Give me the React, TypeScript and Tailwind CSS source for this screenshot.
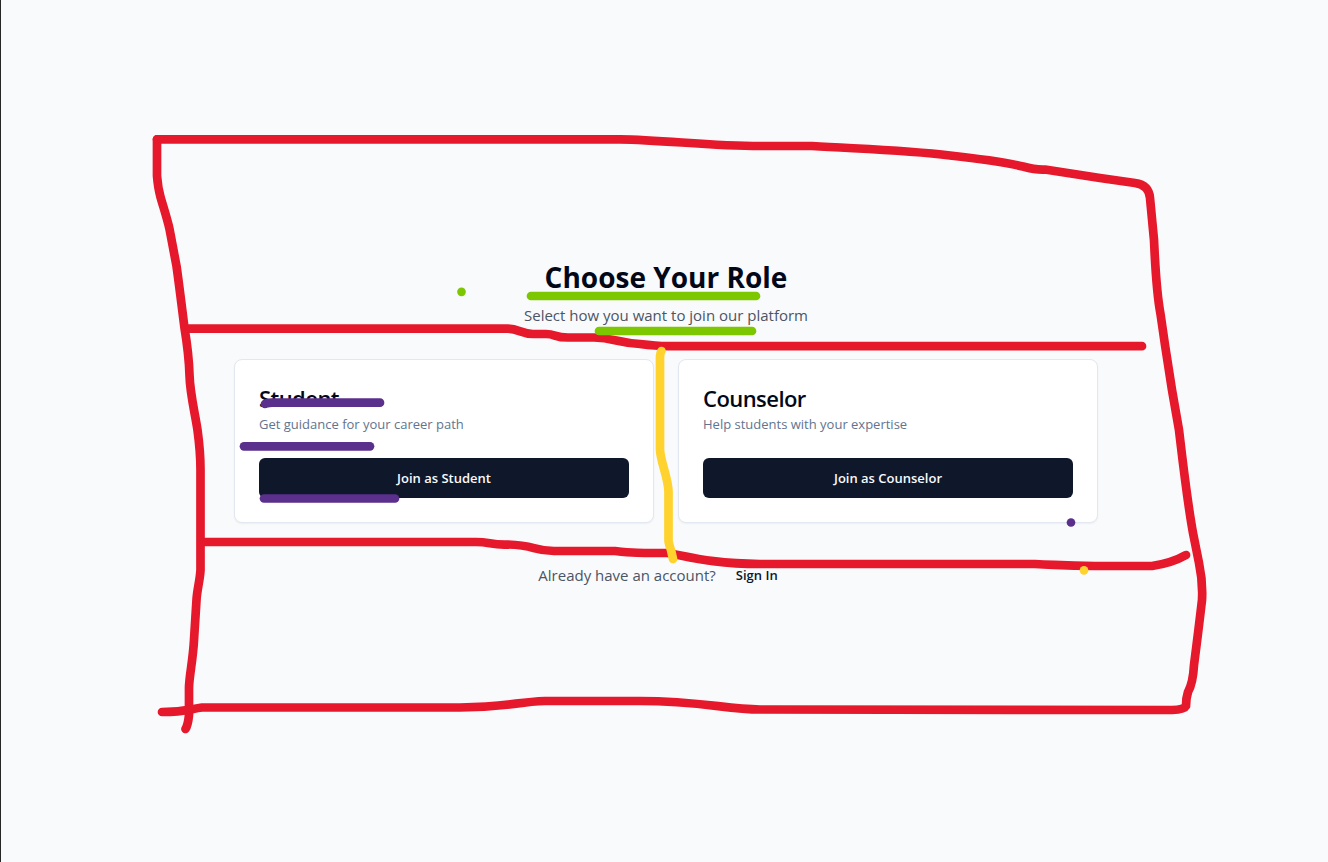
type Role = { title: string; description: string; action: string };

const roles: Role[] = [
  { title: "Student", description: "Get guidance for your career path", action: "Join as Student" },
  { title: "Counselor", description: "Help students with your expertise", action: "Join as Counselor" },
];

function RoleCard({ title, description, action }: Role) {
  return (
    <section className="rounded-lg border border-slate-200 bg-white p-6 shadow-xs">
      <h2 className="pt-0.5 text-[22px] leading-6 font-semibold tracking-tight text-[#020817]">{title}</h2>
      <p className="mt-1 text-[13px] leading-5 text-slate-500">{description}</p>
      <button
        type="button"
        className="mt-6 h-10 w-full rounded-md bg-slate-900 px-4 text-[13px] leading-5 font-semibold text-slate-50"
      >
        {action}
      </button>
    </section>
  );
}

function Markup() {
  return (
    <svg
      aria-hidden="true"
      className="pointer-events-none absolute inset-0 h-full w-full"
      viewBox="1 0 1327 862"
      fill="none"
      strokeWidth="8.7"
      strokeLinecap="round"
      strokeLinejoin="round"
    >
      <g stroke="#e5182c">
        <path d="M157 139.300V176Q158 188 160.500 197C163 206 167 218 169.500 229L176.500 266C178 276 180 292 184.500 328C187 343 189 358 189.500 375C190 394 195 413 197.500 430Q200.500 452 200.500 470V570C200 580 197 590 196.500 600L194 640C193 660 189 677 189 688V715Q188 725 185.500 729" />
        <path d="M157 139.300H620C665 140 710 146 760 146H812C860 149 905 150 950 155.500Q1000 161 1023 166.500Q1036 170 1045 169.500L1100 178L1135 183Q1149 185 1150 198L1154 240C1155 260 1156 290 1160.500 314L1165 345L1172 390L1179 430C1182 455 1187 500 1193 533Q1196 548 1199 563Q1203 582 1202 600Q1199 626 1194 665Q1193 683 1188 692Q1186 698 1186 706Q1184 709.800 1172 710L760 709.500C725 709 700 701 640 701H545C515 702 510 707 460 707.500H202C190 709 185 712 162 712" />
        <path d="M189 328.700H508C519 329 522 334 533 334H546C556 334 554 337.500 568 337.500H594C614 338 618 343 640 344Q656 346 668 346.200H1142" />
        <path d="M205 542H476C490 542 491 545 507 544.500C536 545 532 551 554 551H615C633 553 638 553 668 553C690 557 714 564 760 564H1035C1060 565 1065 566 1095 566H1152Q1172 563 1186 555" />
      </g>
      <g stroke="#7dc700">
        <path d="M531 296H756" />
        <path d="M599 331H752" />
        <path d="M461.500 291.800V291.810" />
      </g>
      <g stroke="#ffd22e">
        <path d="M661.500 351Q660 353 660 358V449C660 461 668.500 478 668.500 492V541Q669 545 671 550L673 559" />
        <path d="M1084 570.300V570.310" />
      </g>
      <g stroke="#5b2f8c">
        <path d="M265 404Q266 403 272 402.700H380" />
        <path d="M244 446.300H370" />
        <path d="M264 498.500H395" />
        <path d="M1071 522.500V522.510" />
      </g>
    </svg>
  );
}

export default function App() {
  return (
    <div className="relative flex min-h-screen items-center justify-center border-l border-neutral-800 bg-[#f9fafc] pb-2 pl-[3px] font-['Open_Sans','Noto_Sans',sans-serif]">
      <main className="w-full max-w-4xl px-4">
        <header className="mb-8 text-center">
          <h1 className="mb-2 text-[28px] leading-9 font-bold text-[#020817]">Choose Your Role</h1>
          <p className="text-[15px] leading-6 text-gray-600">Select how you want to join our platform</p>
        </header>
        <div className="grid gap-6 md:grid-cols-2">
          {roles.map((role) => (
            <RoleCard key={role.title} {...role} />
          ))}
        </div>
        <footer className="mt-8 flex items-center justify-center gap-1 text-[15px] leading-6 text-gray-600">
          <p>Already have an account?</p>
          <a href="#sign-in" className="flex h-10 items-center px-4 text-[13px] leading-5 font-semibold text-slate-900">
            Sign In
          </a>
        </footer>
      </main>
      <Markup />
    </div>
  );
}
